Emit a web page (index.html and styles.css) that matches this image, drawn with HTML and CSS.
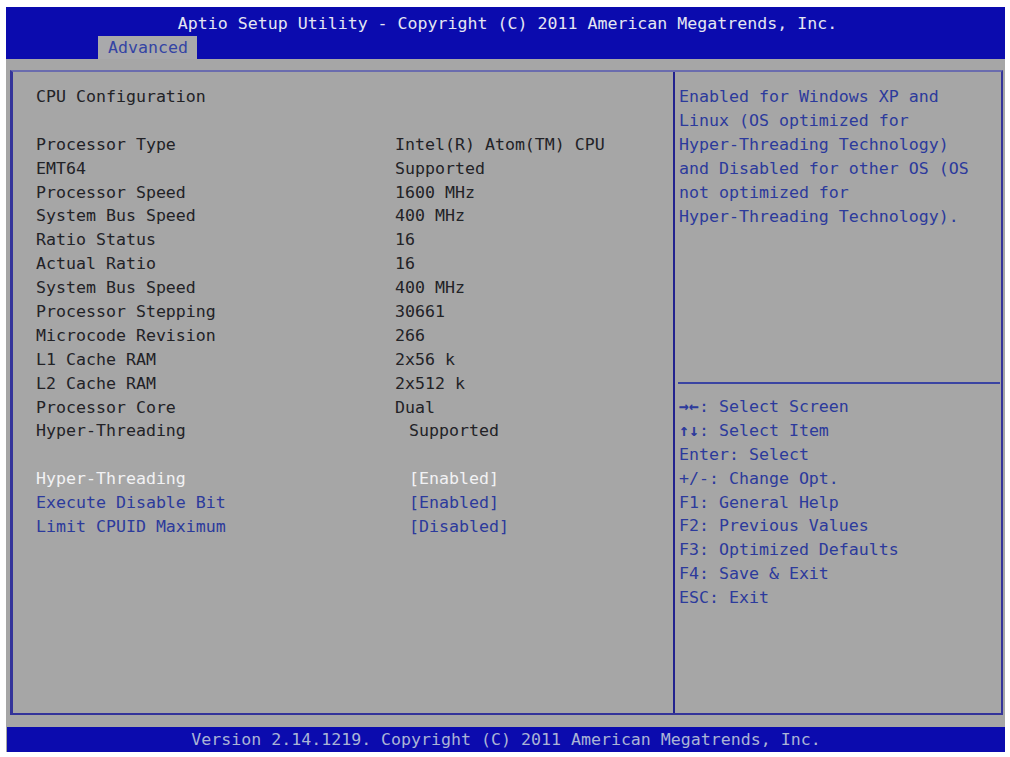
FILE: index.html
```html
<!DOCTYPE html>
<html>
<head>
<meta charset="utf-8">
<link rel="stylesheet" href="styles.css">
</head>
<body>
<div class="screen">
  <header class="topbar">
    <div class="title">Aptio Setup Utility - Copyright (C) 2011 American Megatrends, Inc.</div>
    <div class="tabs"><span class="tab">Advanced</span></div>
  </header>
  <div class="gap"></div>
  <main class="frame">
    <section class="left">
      <div class="row"><span>CPU Configuration</span></div>
      <div class="row"></div>
      <div class="row"><span class="lbl">Processor Type</span><span>Intel(R) Atom(TM) CPU</span></div>
      <div class="row"><span class="lbl">EMT64</span><span>Supported</span></div>
      <div class="row"><span class="lbl">Processor Speed</span><span>1600 MHz</span></div>
      <div class="row"><span class="lbl">System Bus Speed</span><span>400 MHz</span></div>
      <div class="row"><span class="lbl">Ratio Status</span><span>16</span></div>
      <div class="row"><span class="lbl">Actual Ratio</span><span>16</span></div>
      <div class="row"><span class="lbl">System Bus Speed</span><span>400 MHz</span></div>
      <div class="row"><span class="lbl">Processor Stepping</span><span>30661</span></div>
      <div class="row"><span class="lbl">Microcode Revision</span><span>266</span></div>
      <div class="row"><span class="lbl">L1 Cache RAM</span><span>2x56 k</span></div>
      <div class="row"><span class="lbl">L2 Cache RAM</span><span>2x512 k</span></div>
      <div class="row"><span class="lbl">Processor Core</span><span>Dual</span></div>
      <div class="row"><span class="lbl">Hyper-Threading</span><span class="sup">Supported</span></div>
      <div class="row"></div>
      <div class="row sel"><span class="lbl">Hyper-Threading</span><span class="opt">[Enabled]</span></div>
      <div class="row item"><span class="lbl">Execute Disable Bit</span><span class="opt">[Enabled]</span></div>
      <div class="row item"><span class="lbl">Limit CPUID Maximum</span><span class="opt">[Disabled]</span></div>
    </section>
    <aside class="right">
      <div class="help">Enabled for Windows XP and<br>Linux (OS optimized for<br>Hyper-Threading Technology)<br>and Disabled for other OS (OS<br>not optimized for<br>Hyper-Threading Technology).</div>
      <div class="sep"></div>
      <div class="keys">
        <div><b class="arr">→←</b>: Select Screen</div>
        <div><b class="arr">↑↓</b>: Select Item</div>
        <div>Enter: Select</div>
        <div>+/-: Change Opt.</div>
        <div>F1: General Help</div>
        <div>F2: Previous Values</div>
        <div>F3: Optimized Defaults</div>
        <div>F4: Save &amp; Exit</div>
        <div>ESC: Exit</div>
      </div>
    </aside>
  </main>
  <div class="gap2"></div>
  <footer class="bottombar">Version 2.14.1219. Copyright (C) 2011 American Megatrends, Inc.</footer>
</div>
</body>
</html>
```
FILE: styles.css
```css
html, body {
  margin: 0;
  padding: 0;
  background: #ffffff;
}
body {
  font-family: "DejaVu Sans Mono", "Liberation Mono", monospace;
  font-size: 16.6px;
}
.screen {
  margin: 7px 0 0 6px;
  width: 999px;
  height: 745px;
  background: #a6a6a6;
  display: flex;
  flex-direction: column;
}
.topbar {
  background: #0b0bae;
  height: 52px;
  display: flex;
  flex-direction: column;
}
.title {
  height: 29px;
  line-height: 33px;
  text-align: center;
  color: #e4e6f2;
  padding-left: 4px;
}
.tabs {
  height: 23px;
  padding-left: 92px;
  display: flex;
}
.tab {
  background: #a9a9ab;
  color: #3444a4;
  padding: 0 9px 0 10px;
  line-height: 24px;
}
.gap {
  height: 11px;
  flex: none;
}
.frame {
  margin-left: 4px;
  width: 993px;
  height: 645px;
  box-sizing: border-box;
  border: 2px solid #34349a;
  border-top-color: #6a6cae;
  border-left-width: 3px;
  display: flex;
  flex: none;
}
.left {
  width: 662px;
  box-sizing: border-box;
  border-right: 2px solid #22228e;
  padding: 13px 0 0 23px;
  color: #222226;
}
.row {
  height: 23.9px;
  line-height: 23.9px;
  display: flex;
  white-space: pre;
}
.lbl {
  width: 359px;
  flex: none;
}
.sup {
  margin-left: 14px;
}
.sel {
  color: #f2f2f4;
}
.item {
  color: #2c3a9c;
}
.opt {
  margin-left: 14px;
}
.right {
  flex: 1;
  padding: 13px 0 0 4px;
  display: flex;
  flex-direction: column;
  color: #2c3a9c;
}
.help {
  line-height: 23.9px;
  height: 287px;
}
.sep {
  margin: 10px 0 0 -1px;
  width: 322px;
  border-top: 2px solid #3a44a2;
}
.keys {
  margin-top: 11px;
}
.keys div {
  line-height: 23.9px;
  height: 23.9px;
}
.arr {
  font-weight: bold;
}
.gap2 {
  height: 12px;
  flex: none;
}
.bottombar {
  margin-left: 1px;
  background: #0b0bae;
  height: 25px;
  line-height: 26px;
  text-align: center;
  color: #aab4d6;
  flex: none;
}
```
